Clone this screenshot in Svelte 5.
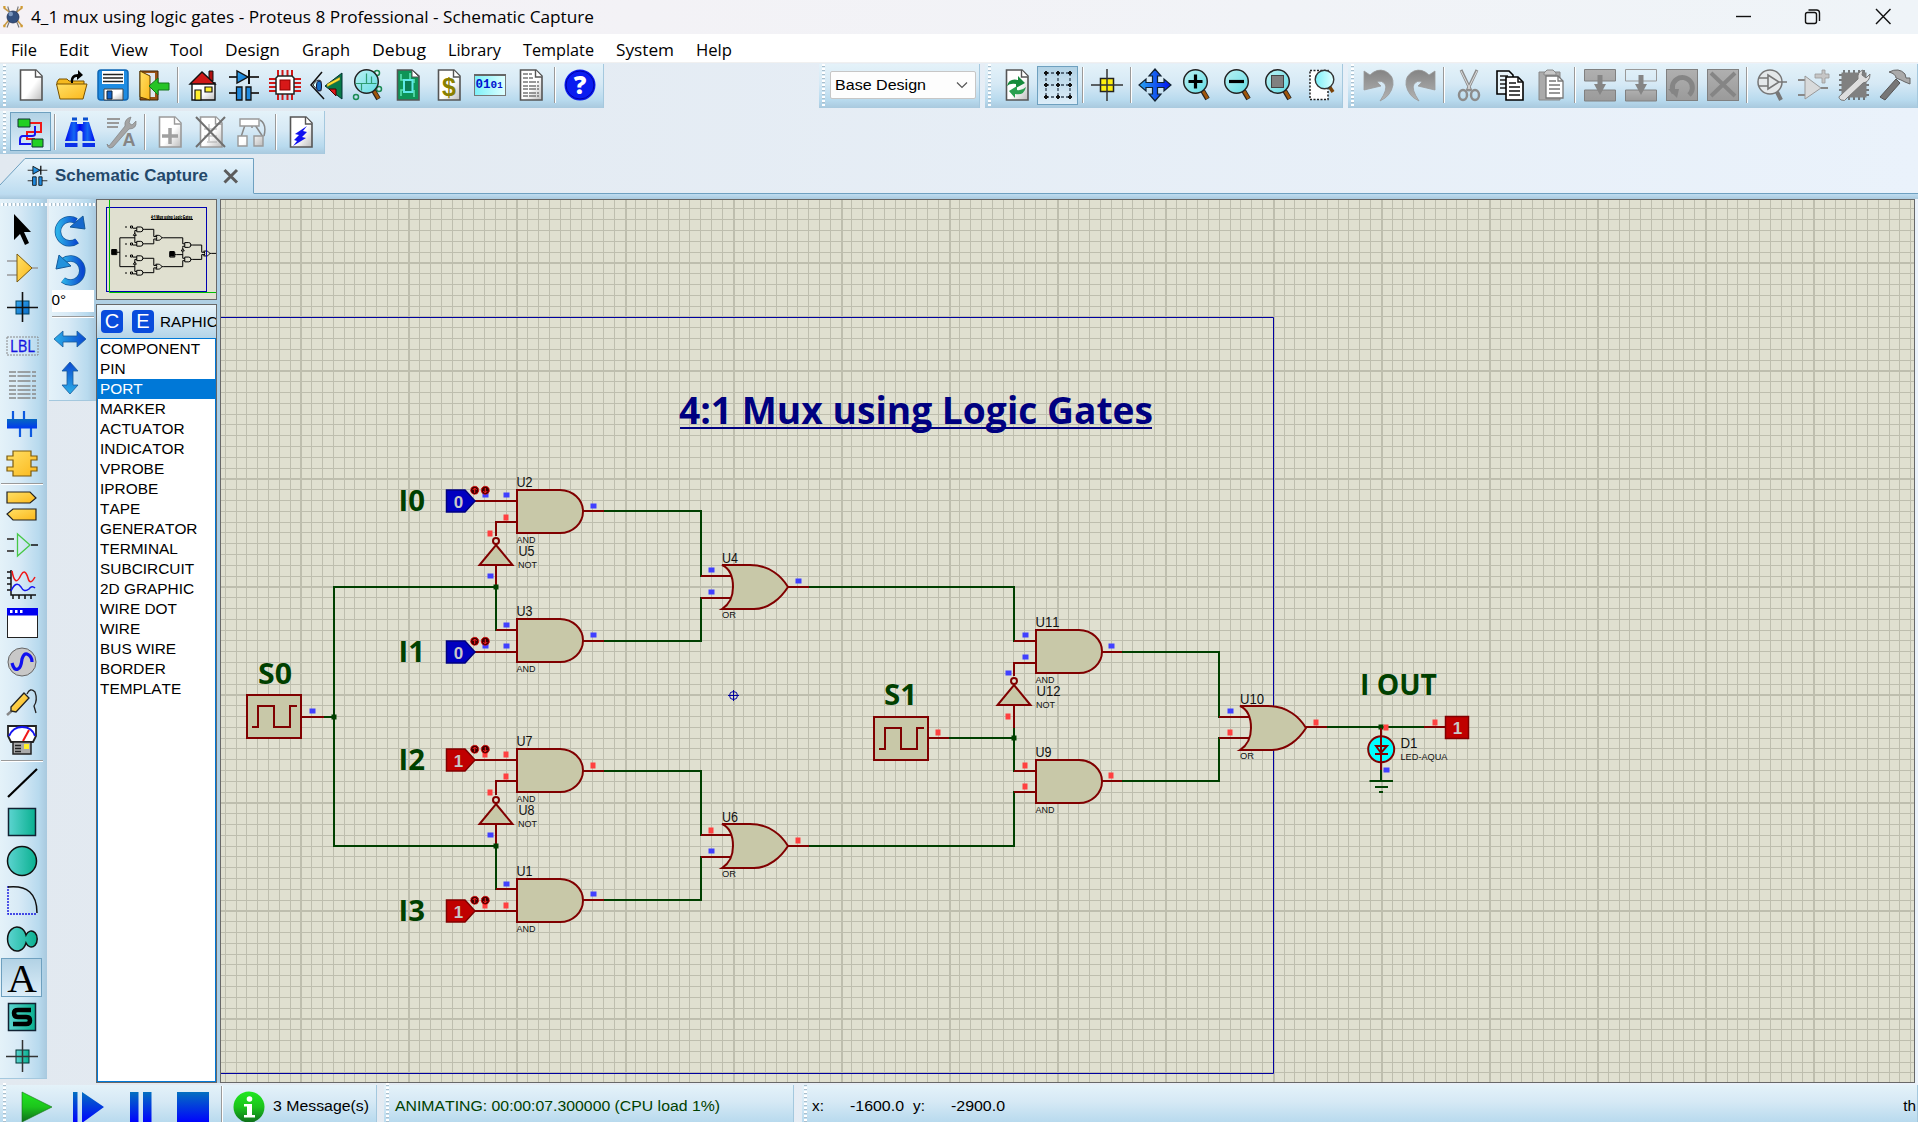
<script>
  const menus = [
    ['File', 26], ['Edit', 30], ['View', 37], ['Tool', 33], ['Design', 55], ['Graph', 48],
    ['Debug', 54], ['Library', 53], ['Template', 71], ['System', 58], ['Help', 36]
  ];

  const page = 'M5.500 1H21L27 7V31H5.500Z';
  const sheet = (body, stroke = '#555') =>
    `<path d="${page}" fill="url(#paper)" stroke="${stroke}" stroke-width="1.600"/><path d="M20.500 1V8H27" fill="#fff" stroke="${stroke}" stroke-width="1.400"/>${body}`;
  const lens = (body) =>
    `<g transform="translate(1.500 -.5)"><path d="M21 22l5 8.500" stroke="#222" stroke-width="5"/><path d="M21.500 22.500l4.500 7.500" stroke="#a0560c" stroke-width="3"/><circle cx="14" cy="13" r="11.800" fill="url(#lens)" stroke="#222" stroke-width="1.500"/>${body}</g>`;
  const diodeCap = `<path d="M1 8H31M5 24H12M20 24H31M1 24H5" stroke="#333" stroke-width="1.800"/><path d="M9 2V14L20 8Z" fill="url(#sky)" stroke="#111" stroke-width="1.400"/><path d="M21 1V15" stroke="#111" stroke-width="2"/><path d="M8.500 18H14V31H8.500ZM18 18H23V31H18Z" fill="#1f8ae0" stroke="#111" stroke-width="1.300"/>`;
  const block = (body) => `<rect x="0.500" y="0.500" width="31" height="31" fill="url(#grey)" stroke="#808080"/>${body}`;
  const downArrow = '<path d="M13.500 6H18.500V15H22L16 26L10 15H13.500Z" fill="#858585"/>';

  const icons = {
    newfile: sheet(''),
    open: `<path d="M1 13L3 10H11L13 12H28V16H1Z" fill="#f5b91e" stroke="#7a5200"/><path d="M0.500 15H31L27 30H4Z" fill="url(#gold)" stroke="#7a5200"/><path d="M15 14C14 8 17 5 22 5V1L27 6L21 11V8C18 8 17 10 17 14Z" fill="#000"/>`,
    save: `<rect x="1" y="1" width="30" height="30" rx="3" fill="#1e8ce2" stroke="#0e66b4" stroke-width="1.500"/><path d="M5 2H27V15H5Z" fill="#fff"/><path d="M6 5.500H26M6 9H26M6 12.500H26" stroke="#222" stroke-width="1.400"/><path d="M7 20H26V31H7Z" fill="url(#paper)" stroke="#444"/><path d="M10 22H15V30H10Z" fill="#0f63c8" stroke="#123"/>`,
    exit: `<path d="M2 2H20V31H2Z" fill="#9b5416" stroke="#3a2208"/><path d="M5 4H17V28H5Z" fill="#dfe7ee"/><path d="M2 2L12 7V31L2 28Z" fill="url(#gold)" stroke="#5a3a00"/><path d="M11 17L20 9V14H31V21H20V26Z" fill="#26c426" stroke="#13761a"/>`,
    home: `<path d="M22 2H26V12H22Z" fill="#b01010" stroke="#111"/><path d="M5 14H28V31H5Z" fill="url(#paper)" stroke="#111" stroke-width="1.400"/><path d="M3 15L15 3L28 15Z" fill="#d01818" stroke="#111" stroke-width="1.400"/><path d="M8 21H14V31H8ZM18 18H25V23H18Z" fill="#ffef2e" stroke="#111" stroke-width="1.200"/>`,
    diode: diodeCap,
    chip: `<path d="M9 1V8M13.500 1V8M18.500 1V8M23 1V8M9 24V31M13.500 24V31M18.500 24V31M23 24V31M0 10H7M0 14H7M0 18H7M0 22H7M25 10H32M25 14H32M25 18H32M25 22H32" stroke="#d01818" stroke-width="2"/><path d="M9 7H23L25 9V25H7V9Z" fill="#fff" stroke="#222" stroke-width="1.500"/><rect x="11" y="11" width="10" height="10" fill="#d81818" stroke="#8c0000"/>`,
    eye: `<path d="M12 3L1 16L14 30" fill="none" stroke="#111" stroke-width="1.500"/><path d="M3 16Q7 9 11 12V22Q7 22 3 16" fill="#dff" stroke="#333"/><ellipse cx="9" cy="17" rx="2.500" ry="5" fill="#1570c8" stroke="#113"/><path d="M15 17L32 4V30Z" fill="#087a48" stroke="#033"/><path d="M17 15L30 8V11L17 18Z" fill="#ffe02e" stroke="#553" stroke-width=".5"/><path d="M19 20H26V27Z" fill="#e01818" stroke="#400"/>`,
    search: `<circle cx="26" cy="4" r="2.500" fill="none" stroke="#1b8b52" stroke-width="1.500"/><circle cx="28" cy="20" r="2.500" fill="none" stroke="#1b8b52" stroke-width="1.500"/><circle cx="5" cy="28" r="2.500" fill="none" stroke="#1b8b52" stroke-width="1.500"/>${lens('<path d="M3 15H14V5M14 15H24M9 15V22M19 15V8" stroke="#2e9c72" fill="none" stroke-width="1.200"/>')}`,
    pcb: `<path d="M5.500 1H20L27 7V31H5.500Z" fill="#0e9457" stroke="#555" stroke-width="1.600"/><path d="M20 1V8H27Z" fill="#fff" stroke="#555"/><path d="M9 5V11H13M18 4V10M22 10V14M9 27V21H13M22 28V21" stroke="#5be0b0" fill="none" stroke-width="1.600"/><rect x="12" y="11" width="8.500" height="12" fill="#0a7c54" stroke="#5fe8e8" stroke-width="2"/>`,
    dollar: sheet('<text x="16" y="27" font-family="Liberation Sans" font-weight="700" font-size="25" fill="#8a8000" text-anchor="middle">$</text>'),
    binary: `<rect x="0.500" y="5.500" width="31" height="21" fill="url(#cyan)" stroke="#777"/><path d="M0 6H32" stroke="#666" stroke-width="2"/><text x="1.500" y="19" font-family="Liberation Mono" font-weight="700" font-size="12.500" fill="#0010d0">01<tspan font-size="11">0</tspan><tspan font-size="9">1</tspan></text>`,
    report: sheet('<path d="M8 5H17M8 9H18M8 13H24M8 17H24M8 20H24M8 24H24M8 27H24" stroke="#777" stroke-width="1.500" stroke-dasharray="5 1 7 1"/>'),
    help: `<circle cx="16" cy="16" r="15.500" fill="#0a1cf0"/><circle cx="16" cy="16" r="14" fill="none" stroke="#0000a8"/><text x="16" y="25" font-family="Open Sans" font-weight="800" font-size="25" fill="#fff" text-anchor="middle">?</text>`,
    netlist: `<path d="M14 7H26V16H12V23H20" fill="none" stroke="#f01818" stroke-width="2"/><path d="M20 10V18Q20 20 17 20H8Q5 20 5 24V28H16" fill="none" stroke="#1414f0" stroke-width="2"/><path d="M3 3H15V11H3ZM17 23H28V31H17Z" fill="#22d022" stroke="#133"/>`,
    binoc: `<path d="M7 6H13V8H19V6H25L31 25H18.500V16Q16 13 13.500 16V25H1Z" fill="url(#royal)"/><path d="M8 3H13M19 3H24" stroke="#0a50d0" stroke-width="3"/><path d="M1 29H13.500M18.500 29H31" stroke="#0a30e8" stroke-width="4"/>`,
    assign: `<path d="M2 3H15M2 7H14M2 11H13" stroke="#999" stroke-width="2"/><path d="M4 30L20 10Q19 3 26 1L24 7L27 9L31 5Q32 13 24 13L8 31Q3 34 2 28Z" fill="#a5a5a5" stroke="#808080" stroke-width=".7"/><text x="24" y="30" font-family="Liberation Sans" font-weight="700" font-size="18" fill="#858585" text-anchor="middle">A</text>`,
    addsheet: sheet('<path d="M16 12V28M8 20H24" stroke="#a0a0a0" stroke-width="3.500"/>', '#9a9a9a'),
    delsheet: sheet('<path d="M14 8V25M9 13H22M9 20H22M12 26H22" stroke="#aaa" fill="none"/><path d="M1 1L30 31M30 1L1 31" stroke="#707070" stroke-width="2"/>', '#9a9a9a'),
    parent: `<path d="M9 9L5 21M16 9V12M19 9L27 21M24 4Q31 8 28 20" fill="none" stroke="#888" stroke-width="1.500"/><path d="M4 3H23V10H4ZM2 20H11V30H2ZM18 20H27V30H18Z" fill="url(#paper)" stroke="#999" stroke-width="1.400"/>`,
    flash: sheet('<path d="M22 10L10 18L14 19L9 24L12 25L8 30L21 22L17 21L22 16L18 15Z" fill="#1010f0"/>'),
    redraw: sheet('<path d="M6 17Q8 9 17 11V7L24 14L15 19V15Q9 14 6 17Z" fill="#168a3c"/><path d="M25 18Q23 27 14 25V29L8 22L16 17V21Q21 22 25 18Z" fill="#2aa050"/>'),
    grid: `<path d="M4 4H28M4 16H28M4 28H28M4 4V28M16 4V28M28 4V28" stroke="#345" stroke-width="1.300" stroke-dasharray="3 2"/><path d="M2 4H6M14 4H18M26 4H30M2 16H6M14 16H18M26 16H30M2 28H6M14 28H18M26 28H30M4 2V6M4 14V18M4 26V30M16 2V6M16 14V18M16 26V30M28 2V6M28 14V18M28 26V30" stroke="#111" stroke-width="2"/>`,
    origin: `<rect x="9.500" y="9.500" width="13" height="13" fill="#ffee10" stroke="#222" stroke-width="1.500"/><path d="M16 0V32M0 16H32" stroke="#333" stroke-width="1.500"/>`,
    pan: `<path d="M16 0L22 7H18.500V13.500H25V10L32 16L25 22V18.500H18.500V25H22L16 32L10 25H13.500V18.500H7V22L0 16L7 10V13.500H13.500V7H10Z" fill="url(#bluex)" stroke="#123" stroke-width="1.200"/>`,
    zoomin: lens('<path d="M14 6V20M7 13H21" stroke="#000" stroke-width="3.200"/>'),
    zoomout: lens('<path d="M6.500 13H21.500" stroke="#000" stroke-width="3.200"/>'),
    zoomall: lens('<rect x="8" y="7" width="12" height="12" fill="#808080" stroke="#444"/>'),
    zoomarea: `<rect x="7" y="1.500" width="18" height="29" fill="#fff" stroke="#222" stroke-width="1.500" stroke-dasharray="2 1.500"/><path d="M26 17l4 6" stroke="#7a4208" stroke-width="3.500"/><circle cx="21.500" cy="10.500" r="9.300" fill="url(#cyan)" stroke="#333" stroke-width="1.400"/>`,
    undo: `<path d="M1 2L7 6Q14 -1 22 2Q31 6 30 16Q28 27 17 32Q25 20 22 15Q19 11 14 13L18 17L1 21Z" fill="url(#greyx)" stroke="#999" stroke-width=".8"/>`,
    redo: `<path d="M31 2L25 6Q18 -1 10 2Q1 6 2 16Q4 27 15 32Q7 20 10 15Q13 11 18 13L14 17L31 21Z" fill="url(#greyx)" stroke="#999" stroke-width=".8"/>`,
    cut: `<path d="M8 1L18 22M24 1L14 22" stroke="#8c8c8c" stroke-width="3"/><path d="M8 2L17 20M24 2L15 20" stroke="#e0e0e0"/><ellipse cx="10" cy="26" rx="4" ry="5" fill="none" stroke="#8c8c8c" stroke-width="2.500"/><ellipse cx="22" cy="26" rx="4" ry="5" fill="none" stroke="#8c8c8c" stroke-width="2.500"/>`,
    copy: `<path d="M3 2H15L19 6V25H3Z" fill="#e8f4fa" stroke="#000" stroke-width="1.600"/><path d="M6 7H14M6 11H17M6 15H17M6 19H17" stroke="#222" stroke-width="1.500"/><path d="M12 8H24L29 13V31H12Z" fill="#fff" stroke="#000" stroke-width="1.600"/><path d="M24 8V13H29M15 14H22M15 18H26M15 22H26M15 26H26" fill="none" stroke="#111" stroke-width="1.500"/>`,
    paste: `<path d="M4 3H25V31H4Z" fill="#aaa" stroke="#888"/><path d="M9 4L12 1H18L21 4V6H9Z" fill="#c8c8c8" stroke="#888"/><path d="M11 7H23L28 12V29H11Z" fill="#fff" stroke="#777" stroke-width="1.300"/><path d="M23 7V12H28M14 12H21M14 16H25M14 20H25M14 24H25" fill="none" stroke="#777" stroke-width="1.300"/>`,
    bcopy: `<path d="M.5 .5H31.500V12H.5ZM.5 21H31.500V32H.5Z" fill="url(#grey)" stroke="#808080"/>${downArrow}`,
    bmove: `<path d="M.5 .5H31.500V12H.5Z" fill="none" stroke="#999"/><path d="M.5 21H31.500V32H.5Z" fill="url(#grey)" stroke="#808080"/>${downArrow}`,
    brotate: block('<path d="M8 24A10 10 0 1 1 23 26" fill="none" stroke="#858585" stroke-width="5"/><path d="M2 20L13 20L11 29Z" fill="#858585"/>'),
    bdelete: block('<path d="M4 4L28 27M28 4L4 27" stroke="#858585" stroke-width="4"/>'),
    pick: `<path d="M21 23l4 8" stroke="#777" stroke-width="4"/><circle cx="14" cy="13" r="12" fill="#e4e8ea" stroke="#777" stroke-width="1.500"/><path d="M3 9H12M3 17H12M12 6V20L23 13ZM23 13H31" fill="none" stroke="#777" stroke-width="1.600"/>`,
    make: `<path d="M1 11H8M1 26H8M24 19H31" stroke="#888" stroke-width="2"/><path d="M8 7V30L24 19Z" fill="#d8dadb" stroke="#999"/><path d="M22 5H25V1H28V5H32V9H28V14H25V9H18V5Z" fill="#c6c6c6" stroke="#999" stroke-width=".8"/>`,
    packaging: `<path d="M6 1V4M11 1V4M16 1V4M21 1V4M26 1V4M6 28V31M11 28V31M16 28V31M21 28V31M26 28V31M1 6H4M1 11H4M1 16H4M1 21H4M28 16H31M28 21H31M28 26H31" stroke="#555" stroke-width="1.500"/><rect x="3.500" y="3.500" width="25" height="25" fill="#808080"/><path d="M3 26L20 10Q19 3 25 1L24 6L28 9L32 5Q32 13 25 14L9 29Q7 33 3 31Q-1 28 3 26Z" fill="#dedede" stroke="#777"/>`,
    hammer: `<path d="M17 10L21 14L6 31L1 28Z" fill="#777" stroke="#555"/><path d="M10 3Q20 -2 26 5L27 9H31V15L26 13L22 11L17 9Q17 5 10 3Z" fill="#aaa" stroke="#666"/>`,
    select: `<path d="M8 1V27L14 21L19 32L23 30L18 19H25Z" fill="#000"/>`,
    component: `<path d="M1 9H11M1 23H11M24 16H32" stroke="#999" stroke-width="1.500"/><path d="M11 2V30L26 16Z" fill="url(#gold)" stroke="#7a5a10"/>`,
    junction: `<rect x="10" y="10" width="13" height="13" fill="url(#sky)" stroke="#046"/><path d="M16.500 1V31M1 16.500H32" stroke="#111" stroke-width="1.600"/>`,
    lbl: `<rect x="1" y="7" width="31" height="18" fill="none" stroke="#888" stroke-dasharray="2 1"/><text x="16.500" y="22" font-family="Open Sans" font-size="15.500" textLength="25" lengthAdjust="spacingAndGlyphs" fill="#1414e0" stroke="#1414e0" stroke-width=".3" text-anchor="middle">LBL</text>`,
    script: `<path d="M3 3H30M3 7H30M3 12H30M3 17H30M3 21H30M3 25H30M3 29H30" stroke="#888" stroke-width="1.400" stroke-dasharray="7 1.500 13 1.500"/>`,
    bus: `<path d="M7 3V12M18 3V12M14 20V29M25 20V29" stroke="#0e5ae0" stroke-width="2.200"/><rect x="1" y="11" width="30" height="9.500" fill="url(#blue)"/>`,
    sub: `<path d="M7 4H25V9H31V13H25V20H31V24H25V29H7V24H1V20H7V13H1V9H7Z" fill="url(#gold)" stroke="#7a5a10" stroke-width="1.200"/>`,
    term: `<path d="M1 2H24L30 8L24 13H1Z" fill="url(#gold)" stroke="#222" stroke-width="1.200"/><path d="M30 19H7L1 24L7 30H30Z" fill="url(#gold)" stroke="#222" stroke-width="1.200"/>`,
    pins: `<path d="M1 10H8M1 22H8" stroke="#555" stroke-width="2"/><path d="M25 16H32" stroke="#111" stroke-width="1.500"/><path d="M11.500 5V27L24 16Z" fill="none" stroke="#46c846" stroke-width="1.300"/>`,
    graph: `<path d="M5 2V27H30M1 4H5M1 10H5M1 16H5M1 22H5M7 27V31M13 27V31M19 27V31M25 27V31" fill="none" stroke="#111" stroke-width="1.500"/><path d="M6 3Q9 20 15 7Q19 0 22 10Q24 18 29 9" fill="none" stroke="#f01818" stroke-width="1.500"/><path d="M5 23Q10 12 15 19Q18 25 23 21Q26 17 29 20" fill="none" stroke="#1414f0" stroke-width="1.500"/>`,
    popup: `<rect x="1.500" y="1.500" width="30" height="29" fill="#fff" stroke="#222"/><rect x="1" y="1" width="31" height="7.500" fill="#0000f0"/><path d="M4 4.500H6.500M9 4.500H11.500M14 4.500H16.500" stroke="#fff" stroke-width="3"/>`,
    generator: `<circle cx="16" cy="16" r="14" fill="#c8c8c8" stroke="#666"/><path d="M6 17Q8 25 12 23Q15 22 16 13Q18 7 21 8Q26 10 26 16" fill="none" stroke="#1010f0" stroke-width="3.200"/>`,
    probe: `<path d="M1 30L8 24" stroke="#888" stroke-width="2.500"/><path d="M5 22L18 8L23 13L10 27L5 26Z" fill="url(#gold)" stroke="#222" stroke-width="1.300"/><path d="M21 9Q24 2 29 7Q32 15 28 21L30 28" fill="none" stroke="#222" stroke-width="1.300"/>`,
    meter: `<path d="M2 2H30V12L27 18H5L2 12Z" fill="#fff" stroke="#222" stroke-width="1.800"/><path d="M3 12Q7 3 16 3Q26 3 29 12" fill="none" stroke="#1414f0" stroke-width="2"/><path d="M17 17L23 6" stroke="#f01818" stroke-width="2"/><rect x="7" y="18" width="18" height="12" fill="#aaa" stroke="#222" stroke-width="1.500"/><path d="M9 21.500H15M9 24.500H15M9 27.500H15" stroke="#222" stroke-width="1.400"/><rect x="18" y="20" width="5" height="5" fill="#fff02a"/>`,
    line: `<path d="M2 30L31 2" stroke="#000" stroke-width="2.200"/>`,
    box: `<rect x="2.500" y="2.500" width="27" height="27" fill="url(#teal)" stroke="#123" stroke-width="1.500"/>`,
    circle: `<circle cx="16" cy="16" r="14.500" fill="url(#teal)" stroke="#111" stroke-width="1.500"/>`,
    arc: `<path d="M2 2V30H31" fill="none" stroke="#1414e0" stroke-width="1.400" stroke-dasharray="2 1"/><path d="M2 3Q31 0 31 29" fill="none" stroke="#111" stroke-width="1.500"/>`,
    closed: `<path d="M20 12A9.500 12 0 1 0 20 20A6 8 0 1 0 20 12Z" fill="url(#teal)" stroke="#111" stroke-width="1.500"/>`,
    text: `<text x="16" y="29.500" font-family="Liberation Serif" font-size="41" text-anchor="middle" fill="#000">A</text>`,
    symbol: `<rect x="2.500" y="2.500" width="27" height="27" fill="url(#teal)" stroke="#123" stroke-width="1.500"/><path d="M25 9H12Q8 9 8 12Q8 16 12 16H20Q24 16 24 19.500Q24 23 20 23H7" fill="none" stroke="#000" stroke-width="4.500"/>`,
    marker: `<rect x="10" y="10" width="13" height="13" fill="url(#teal)" stroke="#033"/><path d="M16.500 0V32M0 16.500H32" stroke="#333" stroke-width="1.500"/>`,
    cw: `<path d="M23 27A12 12 0 1 1 22 7" fill="none" stroke="#145a9a" stroke-width="6.500"/><path d="M23 27A12 12 0 1 1 22 7" fill="none" stroke="url(#skyx)" stroke-width="5"/><path d="M29 2L31 15L16 13Z" fill="#1668cc" stroke="#145a9a"/>`,
    ccw: `<path d="M9 27A12 12 0 1 0 9 8" fill="none" stroke="#145a9a" stroke-width="6.500"/><path d="M9 27A12 12 0 1 0 9 8" fill="none" stroke="url(#skyx)" stroke-width="5"/><path d="M5 2L2 16L17 13Z" fill="#2292dc" stroke="#145a9a"/>`,
    mirrorx: `<path d="M0 16L9 8V13H23V8L32 16L23 24V19H9V24Z" fill="url(#skyx)" stroke="#1a5a9a" stroke-width=".8"/>`,
    mirrory: `<path d="M16 0L24 9H19V23H24L16 32L8 23H13V9H8Z" fill="url(#skyup)" stroke="#1a5a9a" stroke-width=".8"/>`,
    info: `<circle cx="16" cy="16" r="15.500" fill="url(#green)"/><circle cx="16.500" cy="8" r="2.800" fill="#fff"/><path d="M11 13H19V24H22V26.500H11V24H14V15.500H11Z" fill="#fff"/>`,
    play: `<path d="M1 1V31L31 16Z" fill="url(#green)" stroke="#167016" stroke-width=".6"/>`,
    step: `<path d="M0 1H4.500V32H0ZM9 1V32L31 16Z" fill="url(#run)"/>`,
    pause: `<path d="M5 1H13.500V32H5ZM18 1H26.500V32H18Z" fill="url(#run)"/>`,
    stop: `<path d="M0 1H32V32H0Z" fill="url(#run)"/>`,
    logo: `<path d="M4 4Q14 10 28 28M28 4Q18 10 4 28" stroke="#c89a4a" stroke-width="2" fill="none"/><path d="M9 2L12 12M23 2L20 12M8 30L12 20M24 30L20 20" stroke="#777" stroke-width="1.500"/><circle cx="16" cy="16" r="8" fill="#34507e" stroke="#1c2c50"/><circle cx="13" cy="12" r="3" fill="#7c98c0"/><path d="M3 3H6M26 3H29M3 28H6M26 28H29" stroke="#d09a30" stroke-width="3.500"/>`
  };

  const fileBar = ['newfile', 'open', 'save', 'exit', '|', 'home', 'diode', 'chip', 'eye', 'search', 'pcb', 'dollar', 'binary', 'report', '|', 'help'];
  const viewBar = ['redraw', '*grid', '|', 'origin', '|', 'pan', 'zoomin', 'zoomout', 'zoomall', 'zoomarea'];
  const editBar = ['undo', 'redo', '|', 'cut', 'copy', 'paste', '|', 'bcopy', 'bmove', 'brotate', 'bdelete', '|', 'pick', 'make', 'packaging', 'hammer'];
  const designBar = ['*netlist', '|', 'binoc', 'assign', '|', 'addsheet', 'delsheet', 'parent', '|', 'flash'];
  const modeBar = ['select', 'component', 'junction', 'lbl', 'script', 'bus', 'sub', '|', 'term', 'pins', 'graph', 'popup', 'generator', 'probe', 'meter', '|', 'line', 'box', 'circle', 'arc', 'closed', '*text', 'symbol', 'marker'];
  const styles = ['COMPONENT', 'PIN', 'PORT', 'MARKER', 'ACTUATOR', 'INDICATOR', 'VPROBE', 'IPROBE', 'TAPE', 'GENERATOR', 'TERMINAL', 'SUBCIRCUIT', '2D GRAPHIC', 'WIRE DOT', 'WIRE', 'BUS WIRE', 'BORDER', 'TEMPLATE'];

  // Grid: a line every 10.8 units, a heavy one every tenth.
  const gridX = [], gridY = [];
  for (let i = -17; i <= 140; i++) gridX.push({ p: Math.round(408.4 + i * 10.805), w: i % 10 === 0 ? 2 : 1 });
  for (let i = -25; i <= 56; i++) gridY.push({ p: Math.round(478.3 + i * 10.8), w: i % 10 === 0 ? 2 : 1 });

  const ands = [[517, 490, 'U2'], [517, 619, 'U3'], [517, 749, 'U7'], [517, 879, 'U1'], [1036, 630, 'U11'], [1036, 760, 'U9']];
  const ors = [[722, 565, 'U4'], [722, 824, 'U6'], [1240, 706, 'U10']];
  const nots = [[496, 541, 'U5'], [496, 800, 'U8'], [1014, 681, 'U12']];
  const clocks = [[247, 695, 'S0'], [874, 717, 'S1']];
  const inputs = [[501, 0, 'I0'], [652, 0, 'I1'], [760, 1, 'I2'], [911, 1, 'I3']];
  const wires = 'M324 717H334M496 587H334V846H496M496 587V630M496 846V889M604 511H701V576M604 641H701V598M604 771H701V835M604 900H701V857M809 587H1014V641M809 846H1014V792M949 738H1014M1014 728V771M1122 652H1219V717M1122 781H1219V738M1327 727H1424M1381 770V781';
  const pins = 'M301 717H324M475 501H517M496 536V522H517M496 565V587M496 630H517M475 652H517M583 511H604M583 641H604M701 576H732M701 598H732M788 587H809M475 760H517M496 795V781H517M496 825V846M496 889H517M475 911H517M583 771H604M583 900H604M701 835H732M701 857H732M788 846H809M928 738H949M1014 641H1036M1014 676V663H1036M1014 706V728M1014 771H1036M1014 792H1036M1100 652H1122M1100 781H1122M1219 717H1251M1219 738H1251M1306 727H1327M1424 727H1445M1381 728V770';
  const dots = [[334, 717], [496, 587], [496, 846], [1014, 738], [1381, 727]];
  const low = [[485, 495], [506, 495], [490, 576], [506, 625], [485, 646], [506, 646], [593, 506], [593, 635], [711, 570], [711, 592], [798, 581], [312, 711], [490, 835], [506, 884], [711, 851], [593, 894], [1025, 635], [1025, 657], [1008, 673], [1111, 646], [1230, 711], [1386, 770]];
  const high = [[506, 517], [490, 533], [485, 754], [506, 754], [506, 776], [490, 792], [593, 765], [711, 830], [798, 840], [485, 905], [506, 905], [938, 732], [1008, 716], [1025, 765], [1025, 786], [1111, 775], [1230, 732], [1316, 722], [1435, 722], [1386, 727]];
</script>

{#snippet icon(name, size = 32)}
  <svg class="icon" width={size} height={size} viewBox="0 0 32 32">{@html icons[name]}</svg>
{/snippet}

{#snippet tools(list)}
  {#each list as name}
    {#if name === '|'}
      <i class="sep"></i>
    {:else}
      <span class="tool" class:on={name[0] === '*'}>{@render icon(name.replace('*', ''))}</span>
    {/if}
  {/each}
{/snippet}

{#snippet label(text, width, size = 15.3)}
  <svg class="label" {width} height="20"><text x="0" y="15" font-size={size} textLength={width} lengthAdjust="spacingAndGlyphs">{text}</text></svg>
{/snippet}

{#snippet gates()}
  <path class="wire" d={wires} />
  <path class="pin" d={pins} />
  {#each ands as [x, y]}
    <path class="body" d="M{x} {y}h43a23 21.500 0 0 1 0 43h-43z" />
  {/each}
  {#each ors as [x, y]}
    <path class="body" d="M{x} {y}h28C{x + 48} {y} {x + 60} {y + 12} {x + 66} {y + 22}C{x + 59} {y + 33} {x + 47} {y + 44} {x + 32} {y + 44}h-32Q{x + 11} {y + 37} {x + 11} {y + 22}Q{x + 11} {y + 5} {x} {y}z" />
  {/each}
  {#each nots as [x, y]}
    <path class="body" d="M{x} {y + 4}l16.500 20h-33z" />
    <circle class="body ring" cx={x} cy={y} r="3" />
  {/each}
  {#each clocks as [x, y]}
    <path class="body" d="M{x} {y}h54v43h-54z" />
    <path class="pulse" d="M{x + 5} {y + 32}h6v-21h16v21h16v-21h7" />
  {/each}
{/snippet}

<svg class="defs" width="0" height="0">
  <defs>
    <linearGradient id="paper" x1="0" y1="0" x2="1" y2="1"><stop offset=".55" stop-color="#fff" /><stop offset="1" stop-color="#bbb" /></linearGradient>
    <linearGradient id="gold" x1="0" y1="0" x2="1" y2="1"><stop stop-color="#ffe066" /><stop offset="1" stop-color="#fbb81c" /></linearGradient>
    <linearGradient id="sky" x1="0" y1="0" x2="1" y2="1"><stop stop-color="#35a8f0" /><stop offset="1" stop-color="#0a6cc8" /></linearGradient>
    <linearGradient id="skyx"><stop stop-color="#2cb0e8" /><stop offset="1" stop-color="#0a48d0" /></linearGradient>
    <linearGradient id="skyup" x1="0" y1="0" x2="0" y2="1"><stop stop-color="#0a48d0" /><stop offset="1" stop-color="#2cb0e8" /></linearGradient>
    <linearGradient id="bluex"><stop stop-color="#2aa6f0" /><stop offset="1" stop-color="#0010f0" /></linearGradient>
    <linearGradient id="blue" x1="0" y1="0" x2="0" y2="1"><stop stop-color="#0868c0" /><stop offset="1" stop-color="#0038f0" /></linearGradient>
    <linearGradient id="run" x1="0" y1="0" x2="0" y2="1"><stop stop-color="#0470c0" /><stop offset="1" stop-color="#0000ff" /></linearGradient>
    <linearGradient id="royal"><stop stop-color="#0008f0" /><stop offset=".3" stop-color="#1468f0" /><stop offset=".5" stop-color="#0008f0" /><stop offset=".75" stop-color="#1468f0" /><stop offset="1" stop-color="#0008f0" /></linearGradient>
    <linearGradient id="lens" x1="0" y1="0" x2="1" y2="1"><stop stop-color="#bdf2f4" /><stop offset="1" stop-color="#62dce4" /></linearGradient>
    <linearGradient id="cyan"><stop stop-color="#7cf0f8" /><stop offset="1" stop-color="#e0ffff" /></linearGradient>
    <linearGradient id="grey" x1="0" y1="0" x2="0" y2="1"><stop stop-color="#b0b0b0" /><stop offset="1" stop-color="#9a9a9a" /></linearGradient>
    <linearGradient id="greyx" x1="0" y1="0" x2="0" y2="1"><stop stop-color="#848484" /><stop offset="1" stop-color="#b4b4b4" /></linearGradient>
    <linearGradient id="teal"><stop stop-color="#5cd4d0" /><stop offset="1" stop-color="#0ab090" /></linearGradient>
    <linearGradient id="green" x1="0" y1="0" x2="0" y2="1"><stop stop-color="#20e820" /><stop offset=".5" stop-color="#1cc41c" /><stop offset="1" stop-color="#0e6e1c" /></linearGradient>
  </defs>
</svg>

<div class="app">
  <header class="title">
    {@render icon('logo', 24)}
    {@render label('4_1 mux using logic gates - Proteus 8 Professional - Schematic Capture', 563, 16)}
    <svg class="controls" width="160" height="34" viewBox="0 0 160 34">
      <path d="M0 16.500H15" />
      <rect x="69.500" y="12.500" width="11" height="11" rx="2" />
      <path d="M72.500 10H80.500Q83.500 10 83.500 13V21" />
      <path d="M140 9L154.500 24M154.500 9L140 24" />
    </svg>
  </header>

  <nav class="menu">
    {#each menus as [text, width]}{@render label(text, width, 16)}{/each}
  </nav>

  <section class="bars">
    <div class="row">
      <div class="bar file"><i class="grip"></i>{@render tools(fileBar)}</div>
      <div class="bar variant">
        <i class="grip"></i>
        <div class="combo">
          {@render label('Base Design', 91)}
          <svg width="12" height="8" viewBox="0 0 12 8"><path d="M1 1.500L6 6.500L11 1.500" fill="none" stroke="#555" stroke-width="1.200" /></svg>
        </div>
      </div>
      <div class="bar view"><i class="grip"></i>{@render tools(viewBar)}</div>
      <div class="bar edit"><i class="grip"></i>{@render tools(editBar)}</div>
    </div>
    <div class="row second">
      <div class="bar design"><i class="grip"></i>{@render tools(designBar)}</div>
    </div>
  </section>

  <div class="tabs">
    <div class="tab">
      <svg class="tabshape" width="255" height="36" viewBox="0 0 255 36">
        <defs><linearGradient id="tabfill" x1="0" y1="0" x2="0" y2="1"><stop stop-color="#e8f4fb" /><stop offset="1" stop-color="#bcdcf0" /></linearGradient></defs>
        <path d="M0 36V27L25 .5H253.500V36Z" fill="url(#tabfill)" />
        <path d="M0 27L25 .5H253.500V35" fill="none" stroke="#6ea0c0" />
      </svg>
      <div class="tabface">
        {@render icon('diode', 21)}
        {@render label('Schematic Capture', 153, 16.5)}
        <svg width="16" height="16" viewBox="0 0 16 16"><path d="M1.500 2L14 14.500M14 2L1.500 14.500" stroke="#5c5c5c" stroke-width="3" /></svg>
      </div>
    </div>
  </div>
  <div class="strip"></div>

  <main>
    <aside class="modes"><i class="hgrip"></i>{@render tools(modeBar)}</aside>
    <div class="rotation">
      <div class="rotbar">
        <i class="hgrip"></i>
        {@render tools(['cw', 'ccw'])}
        <div class="angle">0°</div>
        <i class="sep"></i>
        {@render tools(['mirrorx', 'mirrory'])}
      </div>
    </div>
    <aside class="selector">
      <svg class="overview" width="121" height="101" viewBox="96 199 121 101">
        <rect x="96" y="199" width="121" height="101" fill="#e0e0d0" />
        <g class="mini" transform="translate(88.950 172.400) scale(.0925 .1114)">
          {@render gates()}
        </g>
        <text x="151" y="219" font-family="Noto Sans" font-weight="900" font-size="5.500" textLength="41" lengthAdjust="spacingAndGlyphs">4:1 Mux using Logic Gates</text>
        <path d="M151 219.500H193" stroke="#000" />
        <path d="M111.500 249H116.500V254.500H111.500ZM169.500 251H174.500V256.500H169.500Z" fill="#000" />
        {#each [227, 244, 256, 273] as y}
          <path d="M125 {y}h2M130.500 {y - 1}h2v2h-2z" stroke="#000" fill="none" />
        {/each}
        <rect x="106.500" y="207.500" width="100" height="84" fill="none" stroke="#0000b0" />
        <path d="M109.500 200V292.500H217" fill="none" stroke="#00c000" />
        <rect x="96.500" y="199.500" width="120" height="100" fill="none" stroke="#686868" />
      </svg>
      <div class="picker">
        <div class="head"><b>C</b><b>E</b><span>RAPHIC</span></div>
        <ul>
          {#each styles as name}<li class:chosen={name === 'PORT'}>{name}</li>{/each}
        </ul>
      </div>
    </aside>

    <div class="sheet">
      <svg width="1694" height="882" viewBox="221 200 1694 882">
        <rect x="221" y="200" width="1694" height="882" fill="#e0e0d0" />
        {#each gridX as { p, w }}<rect x={p} y="200" width={w} height="882" fill="#bebeae" />{/each}
        {#each gridY as { p, w }}<rect x="221" y={p} width="1694" height={w} fill="#bebeae" />{/each}
        <path d="M221 317.500H1273.500V1073.500H221" fill="none" stroke="#0000a0" />
        <g class="circuit">{@render gates()}</g>

        {#each ands as [x, y, id]}
          <text class="ref" x={x - 0.500} y={y - 3} textLength={id.length * 8} lengthAdjust="spacingAndGlyphs">{id}</text>
          <text class="kind" x={x - 0.500} y={y + 52.500} textLength="19" lengthAdjust="spacingAndGlyphs">AND</text>
        {/each}
        {#each ors as [x, y, id]}
          <text class="ref" {x} y={y - 2.500} textLength={id.length * 8} lengthAdjust="spacingAndGlyphs">{id}</text>
          <text class="kind" {x} y={y + 53} textLength="14" lengthAdjust="spacingAndGlyphs">OR</text>
        {/each}
        {#each nots as [x, y, id]}
          <text class="ref" x={x + 22.500} y={y + 14.500} textLength={id.length * 8} lengthAdjust="spacingAndGlyphs">{id}</text>
          <text class="kind" x={x + 22} y={y + 27} textLength="19" lengthAdjust="spacingAndGlyphs">NOT</text>
        {/each}
        {#each dots as [x, y]}<rect x={x - 2.500} y={y - 2.500} width="5" height="5" fill="#004000" />{/each}

        <circle cx="1381.200" cy="749.300" r="13" fill="#00ffff" stroke="#800000" stroke-width="2" />
        <path d="M1381 728V769M1375 754H1388M1376 746L1381 753L1387 746Z" fill="none" stroke="#800000" stroke-width="2" />
        <path d="M1369.500 781H1393M1375 787H1388M1379 792H1383" stroke="#004000" stroke-width="2" />
        <text class="ref" x="1400.500" y="748" textLength="17" lengthAdjust="spacingAndGlyphs">D1</text>
        <text class="kind" x="1400.500" y="760" textLength="47" lengthAdjust="spacingAndGlyphs">LED-AQUA</text>

        {#each low as [x, y]}<rect x={x - 2.500} y={y - 2.500} width="6" height="5" fill="#4040ff" />{/each}
        {#each high as [x, y]}<rect x={x - 2.500} y={y - 2.500} width="5" height="6" fill="#ff4040" />{/each}

        {#each inputs as [y, bit, name]}
          <path d="M446.500 {y - 11}h18.500l10 11l-10 11h-18.500z" fill={bit ? '#c00000' : '#0000c0'} stroke={bit ? '#800000' : '#000080'} stroke-width="1.500" />
          <text class="bit" x="458.500" y={y + 6.500} text-anchor="middle">{bit}</text>
          <circle cx="474.700" cy={y - 10.700} r="4" fill="#400000" stroke="#f00000" stroke-dasharray="2 .7" />
          <circle cx="485.300" cy={y - 10.700} r="4" fill="#400000" stroke="#f00000" stroke-dasharray="2 .7" />
          <path d="M474.700 {y - 8}v-5m-2 2l2 -2l2 2M485.300 {y - 13}v5m-2 -2l2 2l2 -2" fill="none" stroke="#ff2020" />
          <text class="name" x="398.500" y={y + 9.500} textLength="26.500" lengthAdjust="spacingAndGlyphs">{name}</text>
        {/each}
        <rect x="1445.500" y="716.500" width="23" height="22" fill="#c00000" stroke="#800000" stroke-width="1.500" />
        <text class="bit" x="1457.500" y="734" text-anchor="middle">1</text>

        <text class="name" x="258" y="683.500" textLength="34" lengthAdjust="spacingAndGlyphs">S0</text>
        <text class="name" x="884" y="704.500" textLength="33" lengthAdjust="spacingAndGlyphs">S1</text>
        <text class="name" x="1360" y="695" textLength="77" lengthAdjust="spacingAndGlyphs">I OUT</text>
        <text class="heading" x="679" y="424" textLength="474" lengthAdjust="spacingAndGlyphs">4:1 Mux using Logic Gates</text>
        <path d="M680 428H1152" stroke="#000080" stroke-width="2" />
        <g fill="none" stroke="#0000a0"><circle cx="733.500" cy="695.500" r="4" /><path d="M728 695.500H739M733.500 690V701" /></g>
      </svg>
    </div>
  </main>

  <footer>
    <div class="panel run">
      <i class="grip"></i>
      <span>{@render icon('play')}</span><span>{@render icon('step')}</span><span>{@render icon('pause')}</span><span>{@render icon('stop')}</span>
      <i class="sep"></i>
      {@render icon('info')}
      {@render label('3 Message(s)', 96)}
    </div>
    <div class="panel anim"><i class="grip"></i>{@render label('ANIMATING: 00:00:07.300000 (CPU load 1%)', 325)}</div>
    <div class="panel coords">
      <i class="grip"></i>
      <span class="axis">x:</span><span class="num">{@render label('-1600.0', 54)}</span>
      <span class="axis">y:</span><span class="num">{@render label('-2900.0', 54)}</span>
      <span class="unit">th</span>
    </div>
  </footer>
</div>

<style>
  :global(body) { margin: 0; overflow: hidden; }
  :global(svg) { display: block; flex: none; }
  .defs { position: absolute; }
  .app {
    width: 1918px; height: 1122px; overflow: hidden; display: flex; flex-direction: column;
    font-family: "Liberation Sans", Arial, sans-serif; font-size: 15.3px; font-kerning: none; color: #000;
    background: linear-gradient(90deg, #e2e9f0, #eaf2fb);
  }
  .label, .icon { overflow: visible; }
  .title { height: 34px; display: flex; align-items: center; gap: 6px; padding-left: 1px; background: linear-gradient(90deg, #f5f1f5, #eff4f8); font-family: "Open Sans", sans-serif; }
  .title .label { margin-top: 2px; }
  .controls { margin-left: auto; margin-right: 22px; fill: none; stroke: #111; stroke-width: 1.4; }
  .menu { height: 28px; display: flex; gap: 22px; align-items: center; padding-left: 11px; background: #fff; font-family: "Open Sans", sans-serif; }
  .menu .label { margin-top: 5px; }
  .bars { height: 95px; padding-top: 1px; box-sizing: border-box; border-top: 1px solid #f0f0f0; }
  .row { height: 44px; display: flex; }
  .second { margin-top: 3px; height: 43px; }
  .bar { display: flex; align-items: center; box-sizing: border-box; height: 100%; padding-bottom: 2px; background: linear-gradient(#e4f2f9, #d6e9f5 45%, #b8daee 82%, #a9c9de); border-right: 1px solid #a4c8de; }
  .file { width: 604px; }
  .variant { width: 161px; margin-left: 215px; }
  .view { width: 358px; margin-left: 5px; }
  .edit { width: 570px; margin-left: 5px; }
  .design { width: 325px; }
  .grip { width: 3px; height: 42px; margin: 0 4px 0 3px; flex: none; background: repeating-linear-gradient(#fff 0 2px, #a9bfce 2px 3px, transparent 3px 4px); }
  .variant .grip, .view .grip { margin-right: 5px; }
  .tool { width: 41px; height: 39px; flex: none; box-sizing: border-box; display: flex; align-items: center; justify-content: center; }
  .on { border: 1px solid #6ea0bf; background: linear-gradient(#b2d2e5, #dcedf8); }
  .sep { width: 8px; height: 36px; flex: none; background: linear-gradient(90deg, transparent 3px, #9a9a9a 3px 4px, #fff 4px 5px, transparent 5px); }
  .view .sep { width: 7px; }
  .view .sep:nth-of-type(2) { margin-left: 1px; }
  .combo { width: 146px; height: 28px; box-sizing: border-box; border: 1px solid #c6c6c6; border-radius: 2px; background: #fdfdfd; display: flex; align-items: center; justify-content: space-between; padding: 0 7px 0 4px; }
  .tabs { height: 36px; margin-top: 1px; flex: none; box-sizing: border-box; border-bottom: 1px solid #6ea0c0; }
  .tab { width: 255px; height: 36px; display: grid; }
  .tabshape, .tabface { grid-area: 1 / 1; }
  .tabface { display: flex; align-items: center; padding: 0 0 1px 27px; gap: 7px; font-weight: 700; fill: #24486a; z-index: 1; }
  .tabface .label { margin-right: 8px; }
  .strip { height: 5px; flex: none; background: linear-gradient(#bedcf0, #a9c9de); }
  main { display: flex; height: 884px; flex: none; }
  .modes, .rotbar { width: 47px; box-sizing: border-box; display: flex; flex-direction: column; background: linear-gradient(90deg, #e4f2f9, #d8eaf6 40%, #b8daee 82%, #a9c9de); border-bottom: 1px solid #a4c8de; }
  .modes { height: 880px; align-items: flex-start; padding-left: 1px; }
  .rotbar { height: 202px; align-items: center; }
  .rotation { width: 47px; margin: 0 0 0 2px; flex: none; }
  .hgrip { width: 100%; height: 3px; margin: 4px 0 3px; flex: none; background: repeating-linear-gradient(90deg, #fff 0 2px, #a9bfce 2px 3px, transparent 3px 4px); }
  .rotbar .tool { margin-left: -5px; }
  .rotbar .tool:nth-of-type(1) { margin-top: 1px; }
  .modes .sep, .rotbar .sep { width: 42px; height: 4px; background: linear-gradient(transparent 1px, #9a9a9a 1px 2px, #fff 2px 3px, transparent 3px); }
  .rotbar .sep { margin-top: 3px; }
  .angle { width: 42px; height: 22px; background: #fff; line-height: 20px; }
  .rotbar .angle { margin-top: 2px; }
  .selector { width: 124px; flex: none; display: flex; flex-direction: column; gap: 4px; background: #b0d0e4; }
  .picker { width: 121px; height: 780px; box-sizing: border-box; border: 1px solid #686868; display: flex; flex-direction: column; }
  .head { height: 33px; display: flex; align-items: center; gap: 9px; padding-left: 4px; overflow: hidden; background: linear-gradient(#e8f4fb, #b4d4e8); }
  .head b { width: 22px; height: 23px; flex: none; border-radius: 4px; background: #0a4cdc; color: #fff; font-weight: 400; font-size: 20px; line-height: 23px; text-align: center; }
  .head span { white-space: nowrap; margin-left: -3px; }
  ul { margin: 0; padding: 0; list-style: none; flex: 1; background: #fff; border: 1px solid #0078d7; }
  li { height: 20px; line-height: 20px; padding-left: 2px; font-size: 15.4px; }
  .chosen { background: #0078d7; color: #fff; }
  .sheet { flex: 1; box-sizing: border-box; border: 1px solid #686868; margin-right: 3px; overflow: hidden; }
  .circuit .wire { fill: none; stroke: #004000; stroke-width: 2; stroke-linecap: square; }
  .circuit .pin { fill: none; stroke: #800000; stroke-width: 2; }
  .circuit .body { fill: #c8c8a8; stroke: #800000; stroke-width: 2; }
  .circuit .ring { fill: #e0e0d0; }
  .circuit .pulse { fill: none; stroke: #800000; stroke-width: 2; }
  .mini path, .mini circle { fill: none; stroke: #000; stroke-width: 1; vector-effect: non-scaling-stroke; }
  .ref { font-size: 14px; fill: #111; }
  .kind { font-size: 9.5px; fill: #111; }
  .name { font-family: "Open Sans", sans-serif; font-weight: 700; font-size: 28.5px; fill: #004000; }
  .bit { font-weight: 700; font-size: 17px; fill: #c8c8c8; }
  .heading { font-family: "Open Sans", sans-serif; font-weight: 700; font-size: 37.5px; fill: #000080; }
  footer { display: flex; height: 37px; margin-top: 2px; flex: none; }
  .panel { display: flex; align-items: center; height: 100%; box-sizing: border-box; border-right: 1px solid #a4c8de; background: linear-gradient(#e4f2f9, #d6e9f5 45%, #b8daee); }
  .panel .label { margin-top: 4px; }
  .run { width: 377px; }
  .run > :global(svg), .run span { margin-top: 6px; }
  .run .grip { margin-right: 15px; }
  .run span { margin-right: 20px; }
  .run span:nth-of-type(4) { margin-right: 9px; }
  .run .sep { margin-right: 7px; }
  .run .label { margin-left: 8px; }
  .anim { width: 410px; margin-left: 7px; fill: #004000; }
  .anim .grip { margin: 0 6px 0 2px; }
  .coords { flex: 1; margin-left: 8px; overflow: hidden; }
  .coords .grip { margin: 0 5px 0 2px; }
  .axis { width: 38px; margin-top: 4px; }
  .num { width: 63px; }
  .unit { margin: 4px 1px 0 auto; }
</style>
